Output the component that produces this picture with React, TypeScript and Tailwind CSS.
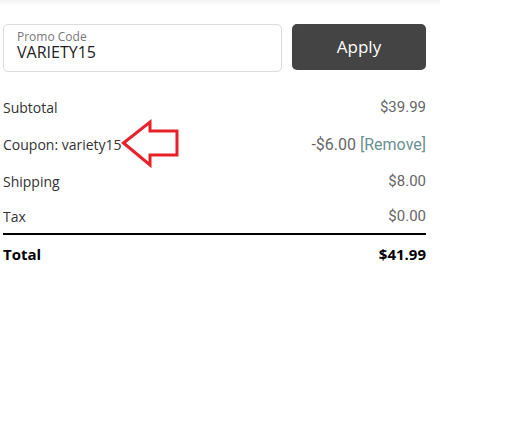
import React from 'react';

const labelFont = { fontFamily: '"Open Sans", "DejaVu Sans", sans-serif' };
const valueFont = { fontFamily: 'Roboto, "Liberation Sans", sans-serif' };

function Row({ label, value, height, size = 'text-[15px]', extra }: { label: string; value: string; height: string; size?: string; extra?: React.ReactNode }) {
  return (
    <div className={`flex items-center justify-between ${height}`}>
      <span className="text-[14px] text-[#333]" style={labelFont}>{label}</span>
      <span className={`${size} text-[#666]`} style={valueFont}>
        {value}
        {extra}
      </span>
    </div>
  );
}

export default function App() {
  return (
    <div className="relative w-[520px] h-[436px] bg-white overflow-hidden">
      {/* shadow from the block above */}
      <div className="w-[440px] h-[6px] bg-gradient-to-b from-[#f3f3f3] to-white" />

      <div className="ml-[3px] w-[423px] pt-[18px]">
        {/* promo code */}
        <div className="flex items-start gap-[10px]">
          <div className="w-[279px] h-[48px] border border-[#dcdcdc] rounded-[5px] px-[13px] pt-[5px]" style={labelFont}>
            <div className="text-[12px] leading-[13px] text-[#777]">Promo Code</div>
            <div className="text-[16px] leading-[19px] text-[#222]">VARIETY15</div>
          </div>
          <button className="w-[134px] h-[46px] rounded-[5px] bg-[#444] text-white text-[17px]" style={labelFont}>
            Apply
          </button>
        </div>

        {/* totals */}
        <div className="mt-[17px]">
          <Row label="Subtotal" value="$39.99" height="h-[37px]" />
          <Row
            label="Coupon: variety15"
            value="-$6.00 "
            height="h-[37px]"
            size="text-[16px]"
            extra={<span className="text-[#6a9090]">[Remove]</span>}
          />
          <Row label="Shipping" value="$8.00" height="h-[36px]" />
          <Row label="Tax" value="$0.00" height="h-[34px]" />
          <div className="h-[2px] bg-black" />
          <div className="flex items-center justify-between h-[38px] text-black font-bold">
            <span className="text-[15px]" style={labelFont}>Total</span>
            <span className="text-[15px]" style={labelFont}>$41.99</span>
          </div>
        </div>
      </div>

      {/* annotation arrow */}
      <svg className="absolute left-0 top-0 pointer-events-none" width="520" height="436">
        <polygon
          points="123.5,143 150,122 150,131 177,131 177,155 150,155 150,165"
          fill="none"
          stroke="#e8202a"
          strokeWidth="3"
          strokeLinejoin="miter"
        />
      </svg>
    </div>
  );
}
